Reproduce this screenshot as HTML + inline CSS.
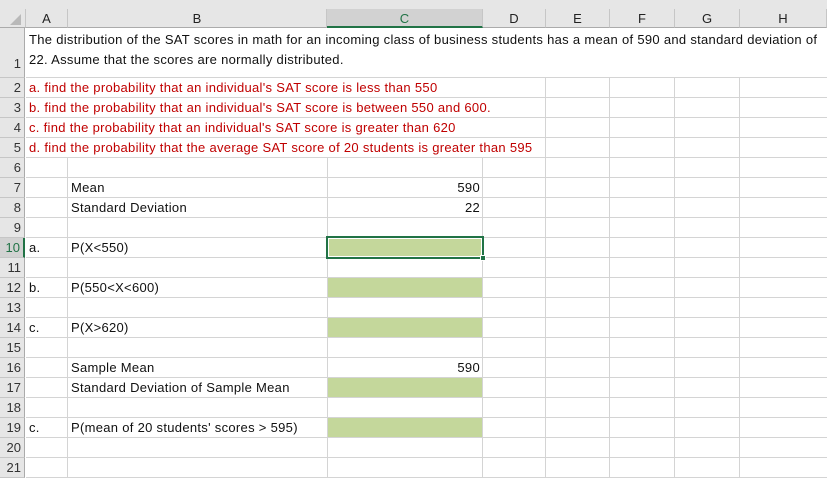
<!DOCTYPE html>
<html><head><meta charset="utf-8"><style>
body{margin:0;width:827px;height:478px;overflow:hidden;background:#fff;font-family:"Liberation Sans",sans-serif;font-size:13px;letter-spacing:0.3px;position:relative}
div{position:absolute;box-sizing:border-box;white-space:nowrap}
.hl{height:1px;background:#d4d4d4;left:0;width:827px}
.vl{width:1px;background:#d4d4d4;top:28px;height:450px}
.ch{top:9px;height:19px;text-align:center;line-height:19px;color:#222;border-right:1px solid #c6c6c6;border-bottom:1px solid #ababab;background:#e6e6e6;letter-spacing:0}
.rh{left:0;width:25px;text-align:right;padding-right:3px;color:#333;background:#e6e6e6;border-right:1px solid #ababab;border-bottom:1px solid #c6c6c6;letter-spacing:0}
.t{color:#111;line-height:20px}
.r{color:#c00000;line-height:20px;left:29px}
.g{background:#c4d79b;left:328px;width:154px;height:19px}
</style></head><body>
<div style="left:0;top:0;width:827px;height:9px;background:#e6e6e6"></div>
<div class="ch" style="left:0;width:26px"><svg width="26" height="19" style="position:absolute;left:0;top:0"><polygon points="21,5 21,16 10,16" fill="#b9b9b9"/></svg></div>
<div class="ch" style="left:26px;width:42px">A</div>
<div class="ch" style="left:68px;width:259px">B</div>
<div class="ch" style="left:327px;width:156px;background:#d2d2d2;color:#217346;border-bottom:2px solid #217346">C</div>
<div class="ch" style="left:483px;width:63px">D</div>
<div class="ch" style="left:546px;width:64px">E</div>
<div class="ch" style="left:610px;width:65px">F</div>
<div class="ch" style="left:675px;width:65px">G</div>
<div class="ch" style="left:740px;width:87px">H</div>

<div class="rh" style="top:28px;height:50px;line-height:72px">1</div>
<div class="rh" style="top:78px;height:20px;line-height:20px">2</div>
<div class="rh" style="top:98px;height:20px;line-height:20px">3</div>
<div class="rh" style="top:118px;height:20px;line-height:20px">4</div>
<div class="rh" style="top:138px;height:20px;line-height:20px">5</div>
<div class="rh" style="top:158px;height:20px;line-height:20px">6</div>
<div class="rh" style="top:178px;height:20px;line-height:20px">7</div>
<div class="rh" style="top:198px;height:20px;line-height:20px">8</div>
<div class="rh" style="top:218px;height:20px;line-height:20px">9</div>
<div class="rh" style="top:238px;height:20px;line-height:20px;background:#d2d2d2;color:#217346;border-right:2px solid #217346">10</div>
<div class="rh" style="top:258px;height:20px;line-height:20px">11</div>
<div class="rh" style="top:278px;height:20px;line-height:20px">12</div>
<div class="rh" style="top:298px;height:20px;line-height:20px">13</div>
<div class="rh" style="top:318px;height:20px;line-height:20px">14</div>
<div class="rh" style="top:338px;height:20px;line-height:20px">15</div>
<div class="rh" style="top:358px;height:20px;line-height:20px">16</div>
<div class="rh" style="top:378px;height:20px;line-height:20px">17</div>
<div class="rh" style="top:398px;height:20px;line-height:20px">18</div>
<div class="rh" style="top:418px;height:20px;line-height:20px">19</div>
<div class="rh" style="top:438px;height:20px;line-height:20px">20</div>
<div class="rh" style="top:458px;height:20px;line-height:20px">21</div>

<div class="hl" style="top:77px;left:26px"></div>
<div class="hl" style="top:97px;left:26px"></div>
<div class="hl" style="top:117px;left:26px"></div>
<div class="hl" style="top:137px;left:26px"></div>
<div class="hl" style="top:157px;left:26px"></div>
<div class="hl" style="top:177px;left:26px"></div>
<div class="hl" style="top:197px;left:26px"></div>
<div class="hl" style="top:217px;left:26px"></div>
<div class="hl" style="top:237px;left:26px"></div>
<div class="hl" style="top:257px;left:26px"></div>
<div class="hl" style="top:277px;left:26px"></div>
<div class="hl" style="top:297px;left:26px"></div>
<div class="hl" style="top:317px;left:26px"></div>
<div class="hl" style="top:337px;left:26px"></div>
<div class="hl" style="top:357px;left:26px"></div>
<div class="hl" style="top:377px;left:26px"></div>
<div class="hl" style="top:397px;left:26px"></div>
<div class="hl" style="top:417px;left:26px"></div>
<div class="hl" style="top:437px;left:26px"></div>
<div class="hl" style="top:457px;left:26px"></div>
<div class="hl" style="top:477px;left:26px"></div>

<div class="vl" style="left:67px;top:158px;height:320px"></div>
<div class="vl" style="left:327px;top:158px;height:320px"></div>
<div class="vl" style="left:482px;top:158px;height:320px"></div>
<div class="vl" style="left:545px;top:158px;height:320px"></div>
<div class="vl" style="left:609px;top:158px;height:320px"></div>
<div class="vl" style="left:674px;top:158px;height:320px"></div>
<div class="vl" style="left:739px;top:158px;height:320px"></div>
<div class="vl" style="left:545px;top:78px;height:80px"></div>
<div class="vl" style="left:609px;top:78px;height:80px"></div>
<div class="vl" style="left:674px;top:78px;height:80px"></div>
<div class="vl" style="left:739px;top:78px;height:80px"></div>

<div style="left:26px;top:28px;width:801px;height:49px;background:#fff"></div>
<div class="t" style="left:29px;top:30px">The distribution of the SAT scores in math for an incoming class of business students has a mean of 590 and standard deviation of</div>
<div class="t" style="left:29px;top:50px">22. Assume that the scores are normally distributed.</div>

<div style="left:26px;top:78px;width:519px;height:79px;background:#fff"></div>
<div style="left:26px;top:97px;width:519px;height:1px;background:#d4d4d4"></div>
<div style="left:26px;top:117px;width:519px;height:1px;background:#d4d4d4"></div>
<div style="left:26px;top:137px;width:519px;height:1px;background:#d4d4d4"></div>
<div class="r" style="top:78px">a. find the probability that an individual's SAT score is less than 550</div>
<div class="r" style="top:98px">b. find the probability that an individual's SAT score is between 550 and 600.</div>
<div class="r" style="top:118px">c. find the probability that an individual's SAT score is greater than 620</div>
<div class="r" style="top:138px">d. find the probability that the average SAT score of 20 students is greater than 595</div>

<div class="t" style="left:71px;top:178px">Mean</div>
<div class="t" style="left:430px;top:178px;width:50px;text-align:right">590</div>
<div class="t" style="left:71px;top:198px">Standard Deviation</div>
<div class="t" style="left:430px;top:198px;width:50px;text-align:right">22</div>
<div class="t" style="left:29px;top:238px">a.</div>
<div class="t" style="left:71px;top:238px">P(X&lt;550)</div>
<div class="t" style="left:29px;top:278px">b.</div>
<div class="t" style="left:71px;top:278px">P(550&lt;X&lt;600)</div>
<div class="t" style="left:29px;top:318px">c.</div>
<div class="t" style="left:71px;top:318px">P(X&gt;620)</div>
<div class="t" style="left:71px;top:358px">Sample Mean</div>
<div class="t" style="left:430px;top:358px;width:50px;text-align:right">590</div>
<div class="t" style="left:71px;top:378px">Standard Deviation of Sample Mean</div>
<div class="t" style="left:29px;top:418px">c.</div>
<div class="t" style="left:71px;top:418px">P(mean of 20 students' scores &gt; 595)</div>

<div class="g" style="top:238px"></div>
<div class="g" style="top:278px"></div>
<div class="g" style="top:318px"></div>
<div class="g" style="top:378px"></div>
<div class="g" style="top:418px"></div>
<div style="left:326px;top:236px;width:158px;height:23px;border:2px solid #217346"></div>
<div style="left:328px;top:238px;width:154px;height:19px;border:1px solid #fff"></div>
<div style="left:480px;top:255px;width:6px;height:6px;background:#217346;border:1px solid #fff"></div>
</body></html>
